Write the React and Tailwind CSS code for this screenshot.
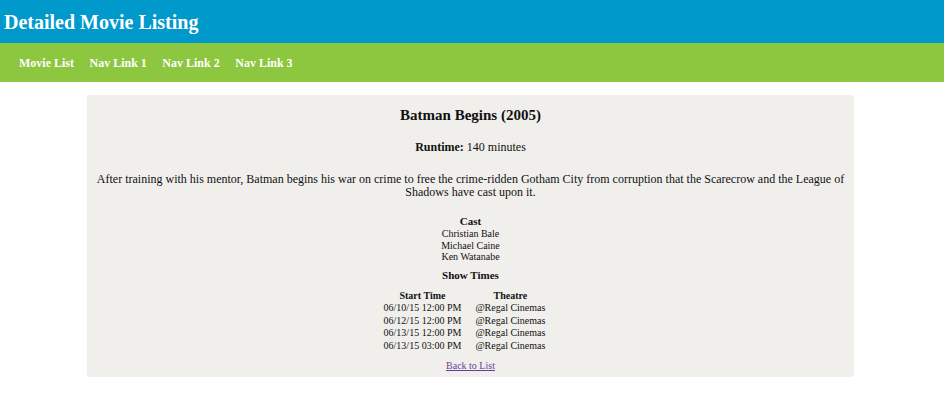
import React from 'react';

const showTimes = [
  { start: '06/10/15 12:00 PM', theatre: '@Regal Cinemas' },
  { start: '06/12/15 12:00 PM', theatre: '@Regal Cinemas' },
  { start: '06/13/15 12:00 PM', theatre: '@Regal Cinemas' },
  { start: '06/13/15 03:00 PM', theatre: '@Regal Cinemas' },
];

const cast = ['Christian Bale', 'Michael Caine', 'Ken Watanabe'];

export default function App() {
  return (
    <div className="min-h-[416px] bg-white text-[#111] font-['Liberation_Serif',serif]">
      {/* Header */}
      <div className="bg-[#0099cc] h-[43px] px-[4px] flex items-center">
        <h1 className="text-[20px] font-bold text-white leading-none">Detailed Movie Listing</h1>
      </div>

      {/* Nav */}
      <div className="bg-[#8dc63f] h-[39px] px-[19px] flex items-center gap-[15.5px]">
        <a className="text-[12px] font-bold text-white">Movie List</a>
        <a className="text-[12px] font-bold text-white">Nav Link 1</a>
        <a className="text-[12px] font-bold text-white">Nav Link 2</a>
        <a className="text-[12px] font-bold text-white">Nav Link 3</a>
      </div>

      {/* Detalle */}
      <div className="pl-[87px] pr-[90px] pt-[13px]">
        <div className="bg-[#f0efec] rounded-[3px] pt-[10px] pb-[5px] px-[8px] text-center">
          <h2 className="text-[15px] font-bold leading-[20px]">Batman Begins (2005)</h2>
          <p className="text-[12px] mt-[15px] leading-[15px]">
            <span className="font-bold">Runtime:</span> 140 minutes
          </p>
          <p className="text-[12px] mt-[18px] leading-[13px]">
            After training with his mentor, Batman begins his war on crime to free the crime-ridden Gotham City from corruption that the Scarecrow and the League of Shadows have cast upon it.
          </p>

          <div className="mt-[16px] text-[10px] leading-[11.5px]">
            <div className="text-[11px] font-bold leading-[13px]">Cast</div>
            {cast.map((c) => (
              <div key={c}>{c}</div>
            ))}
          </div>

          <div className="mt-[5px] text-[11px] font-bold leading-[14px]">Show Times</div>

          <div className="flex justify-center pr-[12px]">
            <table className="mt-[8px] text-[10px] leading-[12.5px]">
              <thead>
                <tr>
                  <th className="font-bold px-[7px]">Start Time</th>
                  <th className="font-bold px-[7px]">Theatre</th>
                </tr>
              </thead>
              <tbody>
                {showTimes.map((s, idx) => (
                  <tr key={idx}>
                    <td className="px-[7px]">{s.start}</td>
                    <td className="px-[7px]">{s.theatre}</td>
                  </tr>
                ))}
              </tbody>
            </table>
          </div>

          <div className="mt-[8px] text-[10px] leading-[12px]">
            <a href="#" className="underline text-[#6a3d9a]">Back to List</a>
          </div>
        </div>
      </div>
    </div>
  );
}
